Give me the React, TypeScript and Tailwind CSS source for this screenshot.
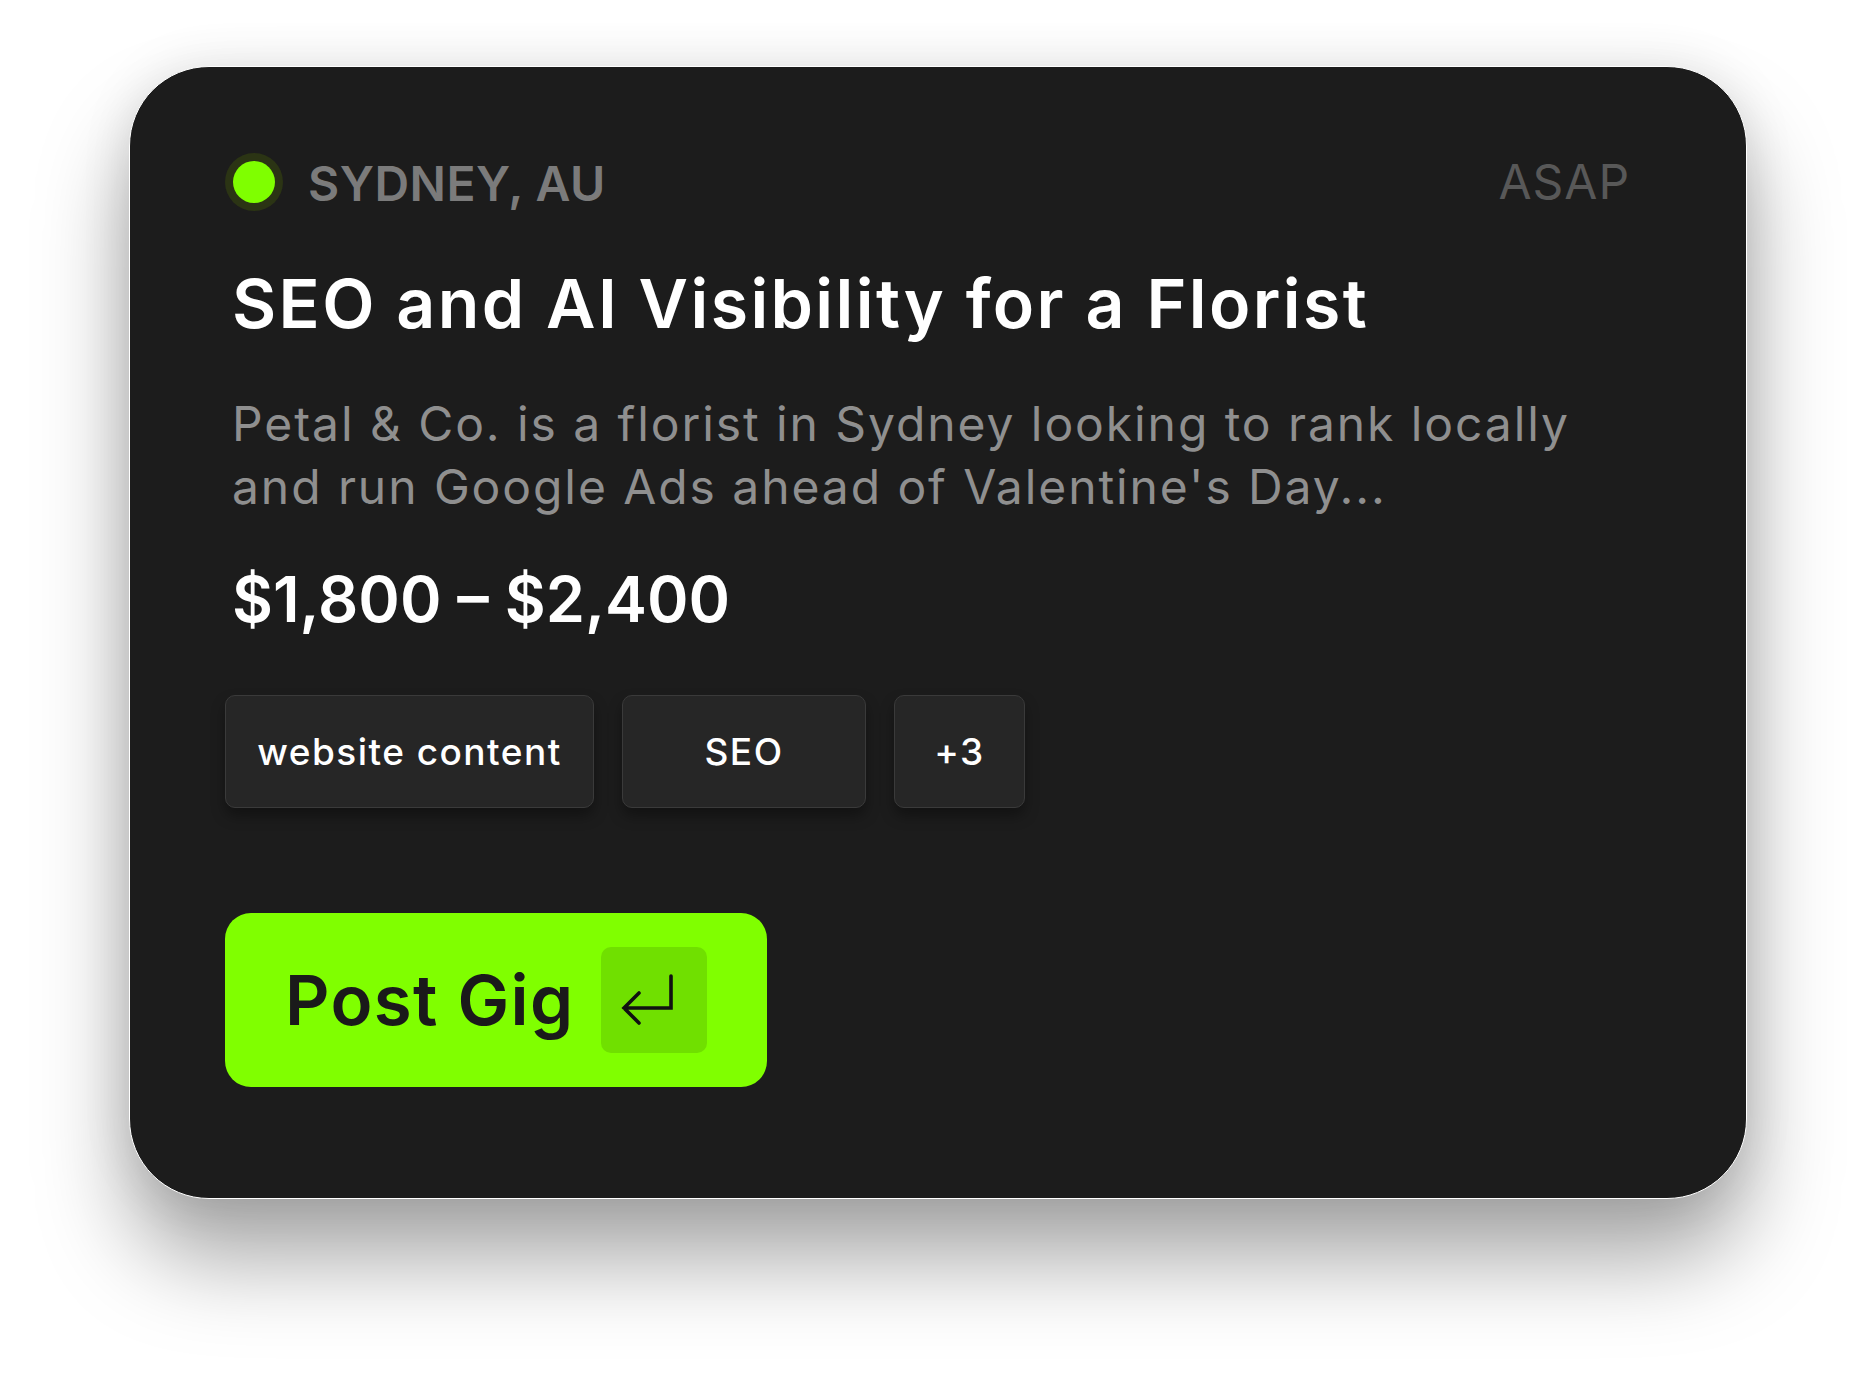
import { ReactNode } from "react";

function Tag({ children, width }: { children: ReactNode; width: string }) {
  return (
    <div
      className={`${width} h-[113px] flex items-center justify-center rounded-[10px] border-[1.5px] border-[#3a3a3a] bg-[#262626] shadow-[0_8px_14px_rgba(0,0,0,0.35)] text-[37px] font-medium tracking-[0.04em] text-white`}
    >
      {children}
    </div>
  );
}

function EnterIcon() {
  return (
    <svg width="106" height="106" viewBox="0 0 106 106" fill="none">
      <path
        d="M70 29V61H23M38 46L23 61L38 76"
        stroke="#111"
        strokeWidth="3.6"
        strokeLinecap="round"
        strokeLinejoin="miter"
      />
    </svg>
  );
}

export default function App() {
  return (
    <div
      className="min-h-screen bg-white pt-[66px] pb-[195px] flex justify-center"
      style={{ fontFamily: "Inter, 'Noto Sans', sans-serif" }}
    >
      <div className="w-[1618px] rounded-[80px] border border-white bg-[#1c1c1c] pl-[95px] pr-[116px] pt-[86px] pb-[111px] shadow-[0_60px_90px_rgba(0,0,0,0.35),0_0_50px_rgba(0,0,0,0.1)]">
        {/* header */}
        <div className="flex items-center justify-between">
          <div className="flex items-center gap-[25px]">
            <div className="w-[58px] h-[58px] rounded-full bg-[#2b3414] flex items-center justify-center">
              <div className="w-[42px] h-[42px] rounded-full bg-[#7fff00]" />
            </div>
            <span className="pt-1 text-[48px] leading-none font-semibold tracking-[0.01em] text-[#7b7b7b]">
              SYDNEY, AU
            </span>
          </div>
          <span className="text-[48px] leading-none tracking-[0.02em] text-[#585858]">ASAP</span>
        </div>

        <div className="pl-[7px]">
          <h1 className="mt-[58px] text-[68px] leading-none font-semibold tracking-[0.035em] text-white">
            SEO and AI Visibility for a Florist
          </h1>
          <p className="mt-[55px] text-[48px] leading-[63px] text-[#8f8f8f] tracking-[0.04em]">
            Petal &amp; Co. is a florist in Sydney looking to rank locally
            <br />
            and run Google Ads ahead of Valentine's Day...
          </p>
          <div className="mt-[50px] text-[63px] leading-none font-semibold text-white">
            $1,800 – $2,400
          </div>
        </div>

        <div className="mt-[64px] flex gap-[28px]">
          <Tag width="w-[369px]">website content</Tag>
          <Tag width="w-[244px]">SEO</Tag>
          <Tag width="w-[131px]">+3</Tag>
        </div>

        <button className="mt-[105px] w-[542px] h-[174px] rounded-[26px] bg-[#80ff00] flex items-center pl-[60px] gap-[26px]">
          <span className="text-[69px] leading-none font-semibold tracking-[0.02em] text-[#1a1a1a]">Post Gig</span>
          <span className="w-[106px] h-[106px] rounded-[10px] bg-[#70e000]">
            <EnterIcon />
          </span>
        </button>
      </div>
    </div>
  );
}
